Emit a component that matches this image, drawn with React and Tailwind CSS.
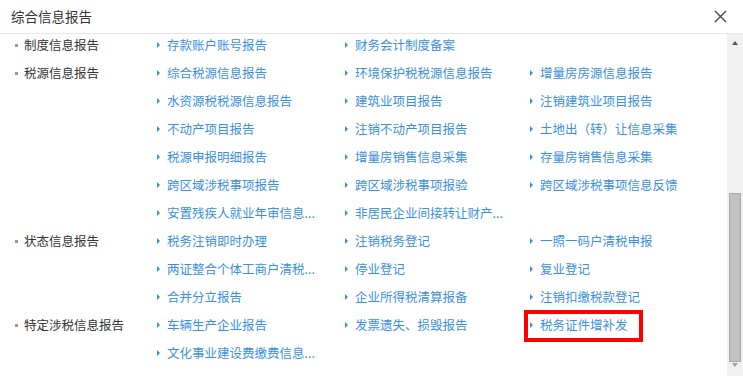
const groups = [
  { name: "制度信息报告", items: ["存款账户账号报告", "财务会计制度备案"] },
  {
    name: "税源信息报告",
    items: [
      "综合税源信息报告",
      "环境保护税税源信息报告",
      "增量房房源信息报告",
      "水资源税税源信息报告",
      "建筑业项目报告",
      "注销建筑业项目报告",
      "不动产项目报告",
      "注销不动产项目报告",
      "土地出（转）让信息采集",
      "税源申报明细报告",
      "增量房销售信息采集",
      "存量房销售信息采集",
      "跨区域涉税事项报告",
      "跨区域涉税事项报验",
      "跨区域涉税事项信息反馈",
      "安置残疾人就业年审信息...",
      "非居民企业间接转让财产...",
    ],
  },
  {
    name: "状态信息报告",
    items: [
      "税务注销即时办理",
      "注销税务登记",
      "一照一码户清税申报",
      "两证整合个体工商户清税...",
      "停业登记",
      "复业登记",
      "合并分立报告",
      "企业所得税清算报备",
      "注销扣缴税款登记",
    ],
  },
  {
    name: "特定涉税信息报告",
    items: ["车辆生产企业报告", "发票遗失、损毁报告", "税务证件增补发", "文化事业建设费缴费信息..."],
  },
];

const font = { fontFamily: '"Noto Sans CJK SC", "Noto Sans", sans-serif' };

function Item({ label }) {
  const marked = label === "税务证件增补发";
  return (
    <div className="relative flex h-7 items-start">
      <div className="flex h-[22px] items-center">
        <span className="mr-[7px] h-0 w-0 border-y-[3px] border-l-[3px] border-y-transparent border-l-[#3b8fe0]" />
        <span className="whitespace-nowrap text-[12.5px] leading-[22px] text-[#3b8fe0]">{label}</span>
      </div>
      {marked && (
        <div className="absolute left-[-6px] top-[-4px] h-[32px] w-[119px] border-4 border-[#ff0000]" />
      )}
    </div>
  );
}

export default function App() {
  return (
    <div className="flex h-[376px] w-[743px] flex-col overflow-hidden bg-white" style={font}>
      <div className="flex h-[34px] shrink-0 items-center justify-between border-b border-[#e6e6e6] pl-[11px] pr-[16px]">
        <span className="text-[13.5px] text-[#333]">综合信息报告</span>
        <svg width="13" height="13" viewBox="0 0 13 13" className="text-[#444]">
          <path d="M1 1L12 12M12 1L1 12" stroke="currentColor" strokeWidth="1.4" />
        </svg>
      </div>

      <div className="flex min-h-0 flex-1">
        <div className="flex-1">
          {groups.map((g) => (
            <div key={g.name} className="flex">
              <div className="flex h-[22px] w-[157px] shrink-0 items-center pl-[15px]">
                <span className="mr-[6px] h-[3px] w-[3px] bg-[#999]" />
                <span className="text-[12.5px] leading-[22px] text-[#333]">{g.name}</span>
              </div>
              <div className="grid flex-1 grid-cols-[188px_185px_1fr]">
                {g.items.map((it) => (
                  <Item key={it} label={it} />
                ))}
              </div>
            </div>
          ))}
        </div>

        <div className="flex w-4 shrink-0 flex-col bg-[#f1f1f1]">
          <div className="flex h-[17px] items-center justify-center">
            <span className="h-0 w-0 border-x-[3.5px] border-b-[4px] border-x-transparent border-b-[#555]" />
          </div>
          <div className="flex flex-1 flex-col px-[2px]">
            <div className="mt-[142px] h-[169px] border border-[#a9a9a9] bg-[#c1c1c1]" />
          </div>
          <div className="flex h-[14px] items-start justify-center pt-[1px]">
            <span className="h-0 w-0 border-x-[3.5px] border-t-[4px] border-x-transparent border-t-[#a3a3a3]" />
          </div>
        </div>
      </div>
    </div>
  );
}
